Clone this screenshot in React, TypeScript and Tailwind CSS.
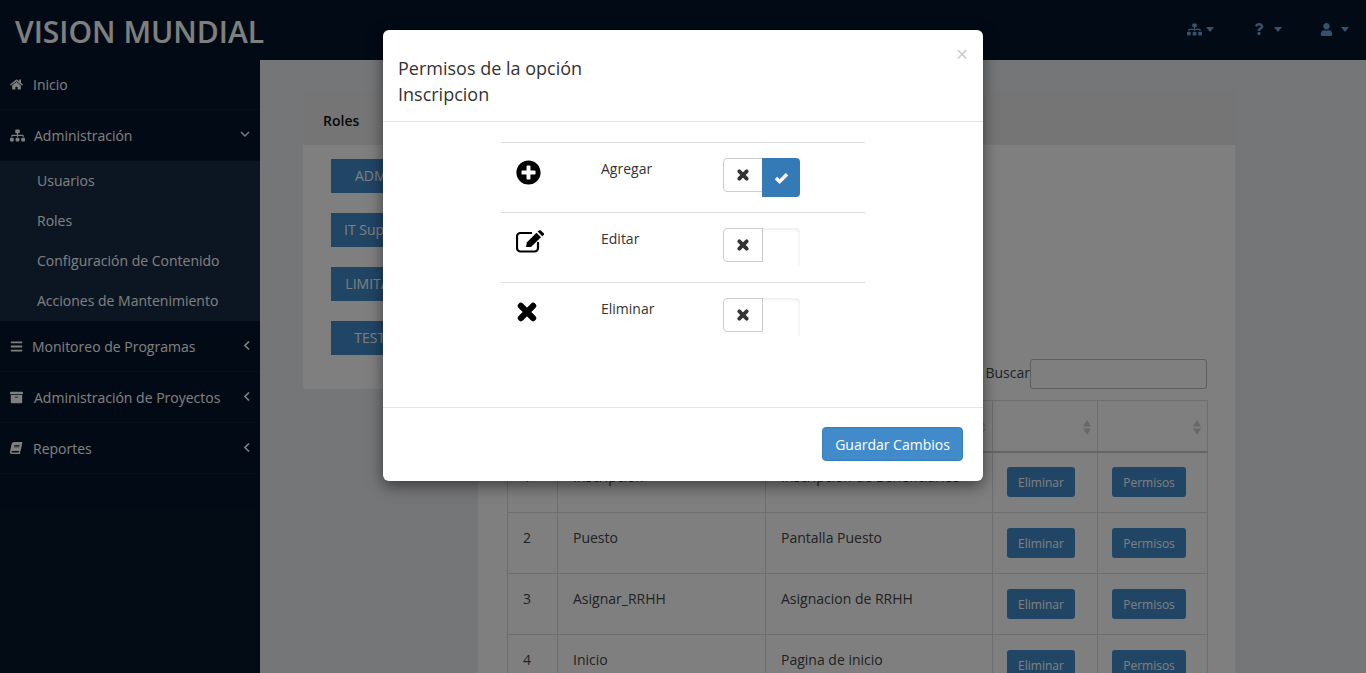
import { FaArchive, FaBars, FaBook, FaHome, FaPlusCircle, FaQuestion, FaSitemap, FaUser } from "react-icons/fa"

const roles = ["ADMIN", "IT Support", "LIMITADO", "TESTER"]

const rows = [
    ["1", "Inscripcion", "Inscripcion de Beneficiarios"],
    ["2", "Puesto", "Pantalla Puesto"],
    ["3", "Asignar_RRHH", "Asignacion de RRHH"],
    ["4", "Inicio", "Pagina de inicio"],
]

const Caret = ({ ml }: { ml: string }) => <span className={`${ml} border-x-[4.5px] border-t-[5px] border-x-transparent border-t-[#6fa3d8]`}></span>

const SortIcon = () => (
    <svg width="8" height="15" viewBox="0 0 8 15" className="absolute right-[6px] top-[19px]">
        <path d="M4 0 L8 6.5 L0 6.5 Z M0 8.5 L8 8.5 L4 15 Z" fill="#d0d0d0" />
    </svg>
)

// chunky X, same shape as the old font-awesome times
const BigX = ({ size }: { size: number }) => (
    <svg width={size} height={size} viewBox="0 0 18 18">
        <path d="M3.5 3.5 L14.5 14.5 M14.5 3.5 L3.5 14.5" stroke="currentColor" strokeWidth="5.6" strokeLinecap="round" fill="none" />
    </svg>
)

const CheckIcon = () => (
    <svg width="15" height="12" viewBox="0 0 15 12">
        <path d="M2 6 L5.6 9.6 L13 2.2" stroke="white" strokeWidth="3.4" fill="none" />
    </svg>
)

const EditIcon = () => (
    <svg width="29" height="23" viewBox="0 0 29 23">
        <path d="M16 3 H4.5 a3.5 3.5 0 0 0 -3.5 3.5 V18 a3.5 3.5 0 0 0 3.5 3.5 H18.5 a3.5 3.5 0 0 0 3.5 -3.5 V12" stroke="black" strokeWidth="2.2" fill="none" />
        <path d="M10 17 L11 12.2 L20.5 2.8 L25 7.2 L15 17 Z" fill="black" />
        <path d="M21.6 1.6 L23.2 0.2 L24.5 0.2 L28 3.6 L28 4.8 L26.2 6.2 Z" fill="black" />
    </svg>
)

const AngleDown = () => (
    <svg width="10" height="6" viewBox="0 0 10 6" className="absolute right-[10px] top-[21px]">
        <path d="M1 1 L5 5 L9 1" stroke="currentColor" strokeWidth="1.4" fill="none" />
    </svg>
)

const AngleLeft = () => (
    <svg width="6" height="9" viewBox="0 0 6 9" className="absolute right-[10px] top-[20px]">
        <path d="M5 0.5 L1 4.5 L5 8.5" stroke="currentColor" strokeWidth="1.6" fill="none" />
    </svg>
)

const MenuItem = ({ icon, label, open, gap }: { icon: React.ReactNode; label: string; open?: boolean; gap: string }) => (
    <div className={`relative flex h-[51px] items-center border-b border-[#0d1c30] pl-[10px] text-[14px] text-white ${gap}`}>
        {icon}
        <span>{label}</span>
        {open ? <AngleDown /> : <AngleLeft />}
    </div>
)

const Switch = ({ on }: { on?: boolean }) => (
    <div className="flex items-start">
        <div className="flex h-[34px] w-[40px] items-center justify-center rounded-l-[4px] border border-[#ccc] bg-white text-[#333]">
            <BigX size={12} />
        </div>
        {on ? (
            <div className="-ml-px flex h-[39px] w-[38px] items-center justify-center rounded-r-[4px] bg-[#337ab7]">
                <CheckIcon />
            </div>
        ) : (
            <div className="-ml-px h-[39px] w-[38px] rounded-r-[4px] shadow-[inset_-1px_2px_3px_rgba(0,0,0,0.07)]"></div>
        )}
    </div>
)

const PermisoRow = ({ icon, label, on }: { icon: React.ReactNode; label: string; on?: boolean }) => (
    <div className="flex h-[70px] border-t border-[#ddd] pt-[15px]">
        <div className="w-[100px] pl-[15px] pt-[2px] text-black">{icon}</div>
        <div className="w-[122px] pt-[1px] text-[14px] leading-[20px] text-[#333]">{label}</div>
        <Switch on={on} />
    </div>
)

const App = () => {
    return (
        <div className="relative h-screen overflow-hidden bg-[#eaecf0] font-['Open_Sans',sans-serif] text-[14px] text-[#444]">
            <div className="flex h-[60px] items-center justify-between bg-[#05152a] pl-[15px]">
                <p className="pt-[2px] text-[30px] font-semibold text-white">VISION MUNDIAL</p>
                <div className="flex items-center pb-[2px] pr-[17px] text-[#6fa3d8]">
                    <FaSitemap className="text-[15px]" />
                    <Caret ml="ml-[4px]" />
                    <FaQuestion className="ml-[39px] text-[12px]" />
                    <Caret ml="ml-[9px]" />
                    <FaUser className="ml-[38px] text-[13px]" />
                    <Caret ml="ml-[8px]" />
                </div>
            </div>

            <div className="flex h-[613px]">
                <div className="w-[260px] shrink-0 bg-[#05152a]">
                    <div className="flex h-[50px] items-center gap-[10px] border-b border-[#0d1c30] pl-[10px] text-white">
                        <FaHome className="text-[13px]" />
                        <span>Inicio</span>
                    </div>
                    <MenuItem icon={<FaSitemap className="text-[15px]" />} label="Administración" open gap="gap-[9px]" />
                    <div className="bg-[#162c44] pl-[37px] text-white">
                        <p className="flex h-[40px] items-center pb-[2px]">Usuarios</p>
                        <p className="flex h-[40px] items-center pb-[2px]">Roles</p>
                        <p className="flex h-[40px] items-center pb-[2px]">Configuración de Contenido</p>
                        <p className="flex h-[40px] items-center pb-[2px]">Acciones de Mantenimiento</p>
                    </div>
                    <MenuItem icon={<FaBars className="text-[13px]" />} label="Monitoreo de Programas" gap="gap-[9px]" />
                    <MenuItem icon={<FaArchive className="text-[13px]" />} label="Administración de Proyectos" gap="gap-[11px]" />
                    <MenuItem icon={<FaBook className="-skew-x-12 text-[12px]" />} label="Reportes" gap="gap-[11px]" />
                </div>

                <div className="flex-1 pl-[43px] pt-[30px]">
                    <div className="w-[932px]">
                        <div className="flex h-[55px] items-center rounded-t-[4px] bg-[#ebebeb] px-5 pt-[6px] font-semibold text-[#111]">Roles</div>
                        <div className="flex items-start">
                            <div className="flex h-[244px] w-[175px] shrink-0 flex-col gap-5 rounded-bl-[4px] bg-white pl-[28px] pt-[14px]">
                                {roles.map((r) => (
                                    <button key={r} className="h-[34px] w-[94px] bg-[#428bca] pb-[2px] text-center text-white">{r}</button>
                                ))}
                            </div>
                            <div className="min-w-0 flex-1 bg-white pb-10 pl-[29px] pr-[28px] pt-[214px]">
                                <div className="flex items-center justify-end">
                                    <span className="pb-[3px]">Buscar</span>
                                    <input className="h-[30px] w-[177px] rounded-[3px] border border-[#bbb]" />
                                </div>
                                <table className="mt-[11px] w-[700px] table-fixed border-collapse">
                                    <thead>
                                        <tr className="h-[51px] border-b-2 border-[#ccc]">
                                            <th className="relative w-[50px] border border-[#ddd]"><SortIcon /></th>
                                            <th className="relative w-[208px] border border-[#ddd]"><SortIcon /></th>
                                            <th className="relative w-[227px] border border-[#ddd]"><SortIcon /></th>
                                            <th className="relative w-[105px] border border-[#ddd]"><SortIcon /></th>
                                            <th className="relative w-[110px] border border-[#ddd]"><SortIcon /></th>
                                        </tr>
                                    </thead>
                                    <tbody>
                                        {rows.map((r) => (
                                            <tr key={r[0]} className="h-[61px]">
                                                <td className="border border-[#ddd] px-[15px] pb-[12px]">{r[0]}</td>
                                                <td className="border border-[#ddd] px-[15px] pb-[12px]">{r[1]}</td>
                                                <td className="border border-[#ddd] px-[15px] pb-[12px]">{r[2]}</td>
                                                <td className="border border-[#ddd] pl-[14px]">
                                                    <button className="h-[30px] w-[68px] rounded-[3px] bg-[#428bca] pt-[2px] text-[12px] text-white">Eliminar</button>
                                                </td>
                                                <td className="border border-[#ddd] pl-[14px]">
                                                    <button className="h-[30px] w-[74px] rounded-[3px] bg-[#428bca] pt-[2px] text-[12px] text-white">Permisos</button>
                                                </td>
                                            </tr>
                                        ))}
                                    </tbody>
                                </table>
                            </div>
                        </div>
                    </div>
                </div>
            </div>

            {/* modal */}
            <div className="absolute inset-0 flex justify-center bg-black/50 pt-[30px]">
                <div className="h-[451px] w-[600px] rounded-[6px] bg-white shadow-[0_5px_15px_rgba(0,0,0,0.5)]">
                    <div className="relative h-[92px] border-b border-[#e5e5e5] pl-[15px] pt-[25px] text-[18px] leading-[26px] text-[#333]">
                        <p>Permisos de la opción</p>
                        <p>Inscripcion</p>
                        <span className="absolute right-[15px] top-[12px] text-[21px] leading-[24px] text-[#ccc]">×</span>
                    </div>
                    <div className="h-[285px] pl-[118px] pt-[20px]">
                        <div className="w-[364px]">
                            <PermisoRow icon={<FaPlusCircle className="text-[25px]" />} label="Agregar" on />
                            <PermisoRow icon={<EditIcon />} label="Editar" />
                            <PermisoRow icon={<div className="pl-[1px] pt-[2px]"><BigX size={20} /></div>} label="Eliminar" />
                        </div>
                    </div>
                    <div className="flex h-[74px] items-start justify-end border-t border-[#e5e5e5] pr-5 pt-[19px]">
                        <button className="h-[34px] w-[141px] rounded-[4px] border border-[#357ebd] bg-[#428bca] text-white">Guardar Cambios</button>
                    </div>
                </div>
            </div>
        </div>
    )
}

export default App
